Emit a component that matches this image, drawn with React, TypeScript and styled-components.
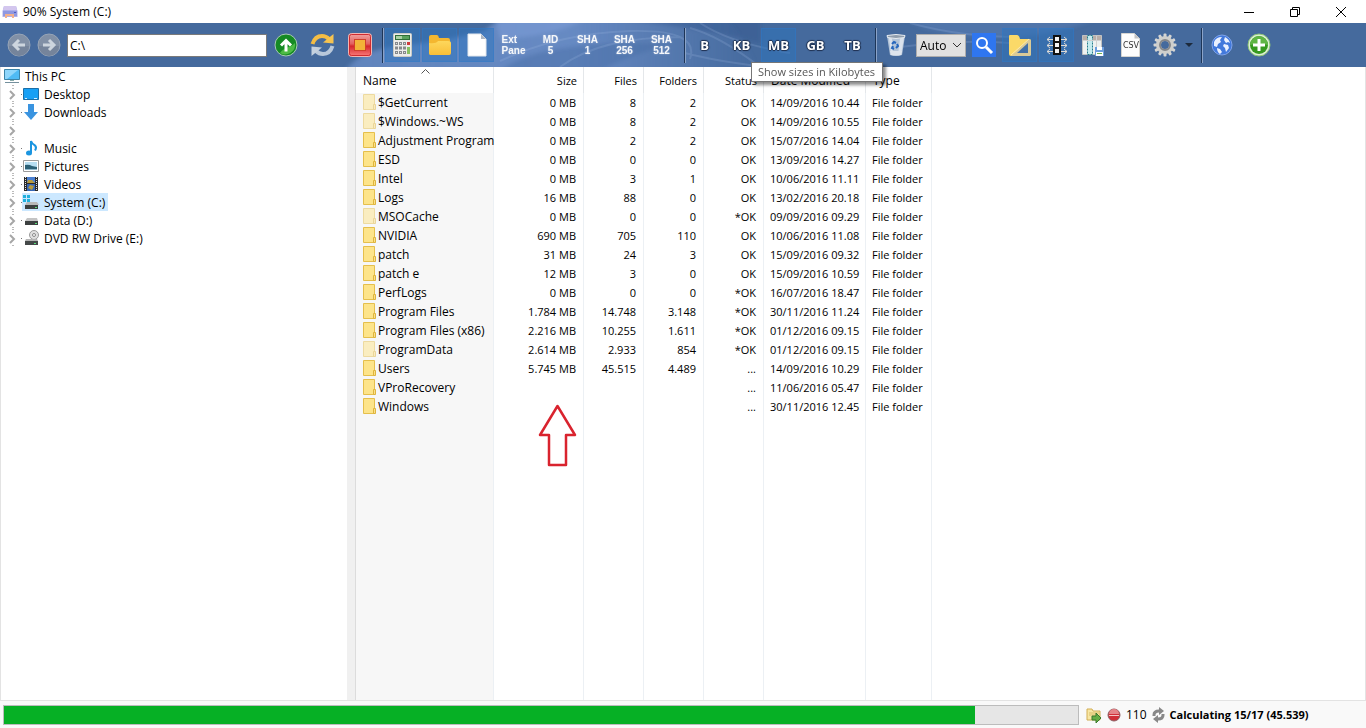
import React from 'react';
import styled, { createGlobalStyle, css } from 'styled-components';

const GlobalStyle = createGlobalStyle`
  * { box-sizing: border-box; }
  body { margin: 0; font-family: "Open Sans", "Noto Sans", sans-serif; font-size: 12px; color: #000; background: #f0f0f0; }
  button, input, select { font: inherit; color: inherit; margin: 0; }
  svg { display: block; flex: none; }
`;

const Window = styled.div`
  display: flex;
  flex-direction: column;
  min-height: 100vh;
`;

const TitleBar = styled.header`
  display: flex;
  align-items: center;
  height: 23px;
  padding: 0 2px;
  background: #fff;
`;

const Title = styled.h1`
  flex: 1;
  margin: 0 0 0 5px;
  font-size: 12px;
  font-weight: 400;
`;

const WindowButton = styled.button`
  display: flex;
  align-items: center;
  justify-content: center;
  width: 46px;
  height: 20px;
  padding: 0;
  border: 0;
  background: none;
`;

const Toolbar = styled.div`
  position: relative;
  z-index: 1;
  display: flex;
  align-items: center;
  height: 44px;
  padding-left: 4px;
  background: #456a9d;
`;

const Swirls = styled.svg`
  position: absolute;
  z-index: -1;
  top: 0;
  left: 0;
`;

const ToolButton = styled.button<{ $width?: number; $active?: boolean }>`
  display: flex;
  align-items: center;
  justify-content: center;
  width: ${(p) => p.$width ?? 37}px;
  height: 36px;
  padding: 0;
  border: 1px solid transparent;
  background: none;
  background-clip: padding-box;
  ${(p) =>
    p.$active &&
    css`
      background-color: rgba(44, 116, 190, 0.5);
      box-shadow: inset 0 0 0 1px rgba(45, 125, 205, 0.4);
    `}
`;

const HashLabel = styled.span<{ $left?: boolean }>`
  font: bold 10px/11px "Liberation Sans", sans-serif;
  color: #f6f8fb;
  text-align: ${(p) => (p.$left ? 'left' : 'center')};
  text-shadow: 0 0 2px #9fb2d3;
  white-space: pre;
`;

const UnitLabel = styled.span`
  font-size: 13px;
  font-weight: 700;
  color: #fff;
  text-shadow: 1px 0 1px #1f3150, -1px 0 1px #1f3150, 0 1px 1px #1f3150, 0 -1px 1px #1f3150;
`;

const Separator = styled.span`
  flex: none;
  width: 6px;
  height: 35px;
  border-right: 1px solid #8ba3c8;
  background: linear-gradient(#1d3557, #1d3557) 4px 0 / 1px 100% no-repeat;
`;

const PathInput = styled.input`
  width: 200px;
  height: 23px;
  margin-left: 3px;
  padding: 0 2px;
  border: 1px solid #7a7a7a;
  background: #fff;
`;

const Picker = styled.span`
  position: relative;
  display: flex;
  align-items: center;
  margin-left: 2px;
  svg { position: absolute; right: 4px; pointer-events: none; }
`;

const UnitSelect = styled.select`
  appearance: none;
  width: 50px;
  height: 23px;
  padding: 0 0 0 3px;
  border: 1px solid #adadad;
  border-radius: 0;
  background: #e1e1e1;
`;

const TipAnchor = styled.span`
  position: relative;
  display: flex;
`;

const Tip = styled.span`
  position: absolute;
  z-index: 2;
  top: 35px;
  left: 28px;
  padding: 0 7px 0 6px;
  border: 1px solid #767676;
  background: #fff;
  box-shadow: 3px 3px 3px rgba(0, 0, 0, 0.45);
  color: #575757;
  font-size: 11px;
  line-height: 18px;
  white-space: nowrap;
`;

const Main = styled.main`
  display: flex;
  flex: 1;
  border: solid #e3e3e3;
  border-width: 0 1px 1px;
  background: #fff;
`;

const TreePane = styled.nav`
  flex: none;
  width: 346px;
`;

const Splitter = styled.div`
  flex: none;
  width: 9px;
  border-right: 1px solid #dcdcdc;
  background: #f0f0f0;
`;

const TreeList = styled.ul`
  margin: 0;
  padding: 0;
  list-style: none;
`;

const TreeRow = styled.li`
  display: flex;
  align-items: center;
  height: 18px;
  padding-left: 2px;
`;

const Twisty = styled.span`
  display: flex;
  align-items: center;
  width: 19px;
  height: 18px;
`;

const TreeItem = styled.span<{ $selected?: boolean }>`
  display: flex;
  align-items: center;
  gap: 5px;
  height: 18px;
  padding: 0 3px 0 1px;
  background: ${(p) => (p.$selected ? '#cce8ff' : 'none')};
`;

const ListPane = styled.section`
  position: relative;
  display: flex;
  flex: 1;
`;

const FileTable = styled.table`
  width: 576px;
  table-layout: fixed;
  border-collapse: separate;
  border-spacing: 0;
  line-height: 16px;
`;

const HeadCell = styled.th<{ $right?: boolean }>`
  position: relative;
  height: 26px;
  padding: 2px 6px 0 7px;
  border-right: 1px solid #e4e7ea;
  font-size: ${(p) => (p.$right ? 11 : 12)}px;
  font-weight: 400;
  text-align: ${(p) => (p.$right ? 'right' : 'left')};
  white-space: nowrap;
`;

const SortMark = styled.svg`
  position: absolute;
  top: 2px;
  left: 65px;
`;

const Cell = styled.td<{ $right?: boolean }>`
  height: 19px;
  padding: 0 7px 0 6px;
  border-right: 1px solid #ecf0f4;
  text-align: ${(p) => (p.$right ? 'right' : 'left')};
  white-space: nowrap;
`;

const NumberCell = styled(Cell)`
  font-size: 11px;
`;

const NameCell = styled(Cell)`
  padding: 0 0 0 7px;
  background: #f7f7f7;
`;

const NameContent = styled.span`
  display: flex;
  align-items: center;
  gap: 1px;
`;

const FillCell = styled(Cell)`
  height: auto;
`;

const FillNameCell = styled(NameCell)`
  height: auto;
`;

const ArrowMark = styled.svg`
  position: absolute;
  top: 336px;
  left: 182px;
`;

const StatusBar = styled.footer`
  display: flex;
  align-items: center;
  height: 27px;
  padding-left: 3px;
  background: #f9f9f9;
`;

const Progress = styled.progress`
  appearance: none;
  flex: 1;
  height: 20px;
  border: 1px solid #bcbcbc;
  background: #e6e6e6;
  &::-webkit-progress-bar { background: #e6e6e6; }
  &::-webkit-progress-value { background: #06b025; }
`;

const StatusInfo = styled.div`
  display: flex;
  align-items: center;
  flex: none;
  gap: 5px;
  width: 287px;
  padding-left: 7px;
`;

const StatusText = styled.strong`
  font-size: 11px;
`;

/* ---------- icons ---------- */

const AppIcon = () => (
  <svg width="16" height="14" viewBox="0 0 16 14">
    <path d="M2 1h12l1.500 5v6H.5V6z" fill="#aeb0ea" />
    <path d="M2 1h12l1 4H1z" fill="#d3c6ee" />
    <path d="M1 6h14v5H1z" fill="#8f98e0" />
    <path d="M3 9h9v4h-2v-2H5v2H3z" fill="#f0b08c" />
    <path d="M12 7h2v1h-2z" fill="#4f5cc0" />
  </svg>
);

const NavIcon = ({ forward }: { forward?: boolean }) => (
  <svg width="24" height="24" viewBox="0 0 24 24">
    <circle cx="12" cy="12" r="11" fill="#8190a6" stroke="#97a4b6" />
    <path d="M2 13a10 10 0 0 0 20 0z" fill="#75849b" />
    <g transform={forward ? 'rotate(180 12 12)' : undefined} fill="none" stroke="#cdd5de" strokeWidth="3">
      <path d="M18 12H8M12 7l-5 5 5 5" />
    </g>
  </svg>
);

const UpIcon = () => (
  <svg width="24" height="24" viewBox="0 0 24 24">
    <circle cx="12" cy="12" r="11" fill="#158a24" stroke="#a9c8b6" />
    <path d="M6 20a10 10 0 0 0 15-10c-4 5-10 3-15 10z" fill="#4dbb45" />
    <path d="M12 18.500V8M7 12.500l5-5 5 5" fill="none" stroke="#fff" strokeWidth="3" />
  </svg>
);

const RefreshIcon = () => (
  <svg width="25" height="24" viewBox="0 0 25 24">
    <path d="M2.500 11Q5 3 12 3q4 0 7 3" fill="none" stroke="#f4bd45" strokeWidth="4" />
    <path d="M13 9.500 23.500 10.500V1z" fill="#f6c350" />
    <path d="M22.500 13Q20 21 13 21q-4 0-7-3" fill="none" stroke="#b9c8da" strokeWidth="4" />
    <path d="M12 14.500 1.500 13.500V23z" fill="#c4d0de" />
  </svg>
);

const StopIcon = () => (
  <svg width="24" height="24" viewBox="0 0 24 24">
    <defs>
      <linearGradient id="stop-face" x1="0" y1="0" x2="0" y2="1">
        <stop offset="0" stopColor="#f2a5a2" />
        <stop offset=".45" stopColor="#e2605f" />
        <stop offset=".55" stopColor="#d5262c" />
        <stop offset="1" stopColor="#fb7f7d" />
      </linearGradient>
    </defs>
    <rect x=".5" y=".5" width="23" height="23" rx="3" fill="url(#stop-face)" stroke="#f3b5b3" />
    <rect x="1.500" y="1.500" width="21" height="21" rx="2" fill="none" stroke="#cf2b30" />
    <path d="M6 6h12v12H6z" fill="#d0402a" />
    <path d="M7 7h10v10H7z" fill="#f3b238" />
  </svg>
);

const CalcIcon = () => (
  <svg width="20" height="24" viewBox="0 0 20 24">
    <rect x=".5" y=".5" width="18" height="23" rx="1" fill="#ececea" stroke="#c9c9c4" />
    <path d="M2 2h15v5H2z" fill="#2f6e38" />
    <path d="M3 3h13v3H3z" fill="#5aa25d" />
    <path d="M3 3h6v3H3z" fill="#a9cfa4" />
    {[10, 14.5, 19].map((y) =>
      [2, 6, 10].map((x) => (
        <rect key={`${x}-${y}`} x={x + 0.5} y={y - 0.5} width="2" height="2" fill="#ddd" stroke="#85898c" />
      )),
    )}
    <path d="M14 9h3v3h-3z" fill="#cf3a3a" />
    <path d="M14 14h3v7h-3z" fill="#86c163" />
  </svg>
);

const FolderIcon = () => (
  <svg width="24" height="24" viewBox="0 0 24 24">
    <defs>
      <linearGradient id="folder-face" x1="0" y1="0" x2="0" y2="1">
        <stop offset="0" stopColor="#fdd75c" />
        <stop offset="1" stopColor="#f9bf38" />
      </linearGradient>
    </defs>
    <path d="M1 4q0-2 2-2h6q1.500 0 2 3h9q2 0 2 2v13q0 2-2 2H3q-2 0-2-2z" fill="#f4b730" />
    <path d="M1 10q7 1 9-2h10q3 0 3 2v10q0 2-2 2H3q-2 0-2-2z" fill="url(#folder-face)" />
  </svg>
);

const PageIcon = () => (
  <svg width="20" height="24" viewBox="0 0 20 24">
    <path d="M1 1h13l5 5v17H1z" fill="#fff" stroke="#e3e7ec" />
    <path d="M14 1v5h5z" fill="#aeb8c4" />
  </svg>
);

const BinIcon = () => (
  <svg width="20" height="24" viewBox="0 0 20 24">
    <path d="M1 3h18l-3 19q-6 2-12 0z" fill="#b3c4d8" />
    <path d="M3 5h3l1 17H5zM14 5h4l-3 17h-3z" fill="#e3eaf3" opacity=".8" />
    <path d="M4 18h12l-1 4q-5 1-10 0z" fill="#dde4ed" />
    <path d="M1 2.500q9-2 18 0l-.5 2q-8.500 2-17 0z" fill="#8f9dad" stroke="#e7ecf1" />
    <g fill="none" stroke="#2767bd" strokeWidth="2">
      <path d="m6 11 2-2 2 1M11 11l1 2-2 2M8 16l-2-1 1-2" />
    </g>
  </svg>
);

const SearchIcon = () => (
  <svg width="24" height="24" viewBox="0 0 24 24">
    <path d="M0 0h24v24H0z" fill="#2f76f0" />
    <circle cx="10" cy="10" r="5" fill="none" stroke="#fff" strokeWidth="2" />
    <path d="m14 14 6 6" stroke="#fff" strokeWidth="3" />
  </svg>
);

const FolderEditIcon = () => (
  <svg width="24" height="24" viewBox="0 0 24 24">
    <path d="M1 3q0-1 1-1h7q2 0 3 4h9q2 0 2 2v13q0 2-2 2H3q-2 0-2-2z" fill="#fbd968" />
    <path d="M23 8v13q0 2-2 2H3L21 6q2 0 2 2z" fill="#d9ca98" />
    <path d="M20 10v10H9z" fill="#4170a8" />
    <path d="M3 22 21 6" stroke="#fbeaae" />
  </svg>
);

const ColumnFitIcon = () => (
  <svg width="22" height="22" viewBox="0 0 22 22">
    <g stroke="#dcd9d4" fill="none">
      <path d="M1 5.500h6M1 11.500h6M1 17.500h6M15 5.500h6M15 11.500h6M15 17.500h6" />
      <path d="m4 3-3 2.500L4 8m0 1-3 2.500L4 14m0 1-3 2.500L4 20M18 3l3 2.500L18 8m0 1 3 2.500-3 2.500m0 1 3 2.500-3 2.500" />
    </g>
    <path d="M8 2h6v18H8z" fill="#f4f4f4" stroke="#111" strokeWidth="2" />
    <path d="M8 8h6M8 14h6" stroke="#111" strokeWidth="2" />
  </svg>
);

const ColumnSaveIcon = () => (
  <svg width="23" height="23" viewBox="0 0 23 23">
    <path d="M.5 1.500h19v19H.5z" fill="#eef1f1" stroke="#c2c2c2" />
    <path d="M1 2h18v4H1z" fill="#b9aea8" />
    <path d="M5.500 1.500h5v19h-5z" fill="#c4ebf0" stroke="#247b8b" strokeDasharray="2 1" />
    <path d="M14.500 2v18M1 6.500h18" stroke="#d2d2d2" />
    <path d="M13 13h9v9h-9z" fill="#6c9ede" />
    <path d="M15 13h5v3h-5zM14 18h7v4h-7z" fill="#fff" />
    <path d="M15 19h5v1h-5z" fill="#6eb04b" />
  </svg>
);

const CsvLabel = styled.text`
  font: 8px "DejaVu Sans", sans-serif;
  fill: #333;
`;

const CsvIcon = () => (
  <svg width="20" height="24" viewBox="0 0 20 24">
    <path d="M.5.5h13l5 5v18H.5z" fill="#fdfdfd" stroke="#d5d5d2" />
    <path d="M13.500.5v5h5z" fill="#c4c4c4" />
    <CsvLabel x="10" y="15" textAnchor="middle">CSV</CsvLabel>
  </svg>
);

const GearIcon = () => (
  <svg width="24" height="24" viewBox="0 0 24 24">
    {Array.from({ length: 12 }, (_, i) => (
      <rect key={i} x="10.500" y="0.500" width="3" height="5" rx="1" fill="#d5d5d3" transform={`rotate(${i * 30} 12 12)`} />
    ))}
    <circle cx="12" cy="12" r="6.500" fill="none" stroke="#cfcfcc" strokeWidth="5" />
    <circle cx="12" cy="12" r="5" fill="none" stroke="#85878a" strokeWidth="2" />
  </svg>
);

const CaretIcon = () => (
  <svg width="8" height="4" viewBox="0 0 8 4">
    <path d="M0 0h8L4 4z" fill="#1d2a3c" />
  </svg>
);

const GlobeIcon = () => (
  <svg width="22" height="22" viewBox="0 0 22 22">
    <circle cx="11" cy="11" r="10" fill="#4279dc" stroke="#7fa3ea" />
    <path d="M3 8q2-5 8-5l-2 3 1 2-3 2-1 3-3-1zM14 3q4 2 5 6l-2-1-2 1-2-3zM13 10l4 1 1 3-3 4-1-4-2-2zM6 14l3 1 2 3-2 2q-3-2-3-6z" fill="#eaf1ff" />
  </svg>
);

const AddIcon = () => (
  <svg width="24" height="24" viewBox="0 0 24 24">
    <circle cx="12" cy="12" r="11" fill="#ddeed5" stroke="#8cc475" />
    <circle cx="12" cy="12" r="9" fill="#36991f" />
    <path d="M3 12a9 9 0 0 1 18 0q-9-3-18 0z" fill="#5fb544" />
    <path d="M12 6v12M6 12h12" stroke="#fff" strokeWidth="3" />
  </svg>
);

const ChevronIcon = ({ leaf }: { leaf: boolean }) => (
  <svg width="19" height="18" viewBox="0 0 19 18">
    <path d="m7 6 4 4-4 4" fill="none" stroke="#a6a6a6" strokeWidth="2" />
    <path d="M10 0v1M10 3v1M10 16v1" stroke="#777" />
    {leaf && <path d="M18 9.500h1" stroke="#777" />}
  </svg>
);

const TreeIcon = ({ kind }: { kind: string }) => (
  <svg width="16" height="16" viewBox="0 0 16 16">
    {kind === 'pc' && (
      <>
        <path d="M.5 1.500h15v10H.5z" fill="#4fbbf5" stroke="#3c84a8" />
        <path d="M1 2h13L3 11H1z" fill="#8fd6fb" />
        <path d="M6 12h4v1H6z" fill="#8aa" />
        <path d="M1 14.500h14" stroke="#74909d" />
      </>
    )}
    {kind === 'desktop' && (
      <>
        <path d="M.5 2.500h15v11H.5z" fill="#17a0f5" stroke="#1b6fa8" />
        <path d="M2 12.500h2m7 0h3" stroke="#d6efff" />
      </>
    )}
    {kind === 'downloads' && <path d="M5 0h6v8h4l-7 8-7-8h4z" fill="#3a94e0" />}
    {kind === 'music' && (
      <>
        <ellipse cx="6" cy="13" rx="3" ry="2.500" fill="#1b95e0" />
        <path d="M8 13V1q1 3 4 4.500 2 2 0 5" fill="none" stroke="#1b95e0" strokeWidth="2" />
      </>
    )}
    {kind === 'pictures' && (
      <>
        <path d="M.5 2.500h15v11H.5z" fill="#fff" stroke="#9a9a9a" />
        <path d="M2 4h12v8H2z" fill="#b7def2" />
        <path d="M2 7q4-1 7 1l5 1v3H2z" fill="#2b6076" />
        <path d="M2 11h12v1H2z" fill="#8fb8cc" />
      </>
    )}
    {kind === 'videos' && (
      <>
        <path d="M1 1h14v14H1z" fill="#2b2b2b" />
        <path d="M4 1h8v6H4z" fill="#4a7fd0" />
        <path d="M4 8h8v7H4z" fill="#3767b4" />
        <path d="M5 4h4l3 3H4zM7 9l4 1-2 4-4-2z" fill="#b89a3c" />
        <path d="M2.500 1v14M13.500 1v14" stroke="#e5e5e5" strokeDasharray="1 1" />
      </>
    )}
    {kind === 'system' && (
      <>
        <path d="M0 1h3v3H0zM4 1h3v3H4zM0 5h3v3H0zM4 5h3v3H4z" fill="#21b0dc" />
        <path d="M4 8h10l2 3H2z" fill="#b9b9b9" />
        <path d="M2 11h13v4H2z" fill="#3c4040" />
        <path d="M12 13h2v1h-2z" fill="#59e07a" />
      </>
    )}
    {kind === 'data' && (
      <>
        <path d="M4 6h10l1 3H2z" fill="#c4c4c4" />
        <path d="M2 9h13v4H2z" fill="#3c4040" />
        <path d="M12 11h2v1h-2z" fill="#59e07a" />
      </>
    )}
    {kind === 'dvd' && (
      <>
        <circle cx="11" cy="5" r="4.500" fill="#e0e0e0" stroke="#9b9b9b" />
        <circle cx="11" cy="5" r="1.500" fill="#fff" stroke="#888" />
        <path d="M3 9h11l1 2H2z" fill="#b5b5b5" />
        <path d="M2 11h13v4H2z" fill="#444848" />
        <path d="M11 13h2v1h-2z" fill="#59e07a" />
      </>
    )}
  </svg>
);

const RowFolderIcon = ({ faded }: { faded?: boolean }) => (
  <svg width="14" height="17" viewBox="0 0 14 17" opacity={faded ? 0.5 : 1}>
    <path d="M.5.5h11v15H.5z" fill="#fde48a" stroke="#e5bf4c" />
    <path d="M10.500 10.500h2v5h-2z" fill="#fbe08a" stroke="#dfb53d" />
  </svg>
);

const ToolbarSwirls = () => (
  <Swirls width="1240" height="44" viewBox="0 0 1240 44" aria-hidden="true">
    <defs>
      <linearGradient id="haze" gradientUnits="userSpaceOnUse" x1="345" x2="760" y1="0" y2="0">
        <stop offset="0" stopColor="#7d9fdc" stopOpacity=".5" />
        <stop offset=".55" stopColor="#7d9fdc" stopOpacity=".6" />
        <stop offset="1" stopColor="#7d9fdc" stopOpacity="0" />
      </linearGradient>
      <filter id="soft" x="-10%" y="-30%" width="120%" height="160%">
        <feGaussianBlur stdDeviation="2" />
      </filter>
    </defs>
    <g filter="url(#soft)">
      <path d="M345 48q15-22 60-26 40-4 80-14 10-12 30-14h210q20 20 35 54z" fill="url(#haze)" />
      <path d="M495-4h90q-30 18-85 20z" fill="#8aa8e0" opacity=".4" />
      <path d="M620-4h140v24q-60-14-140-24z" fill="#33568d" opacity=".45" />
      <path d="M500 48q20-18 70-24 60-8 100-2-40 10-70 26z" fill="#486ca4" opacity=".45" />
      <path d="M905-4h190q-40 18-100 18T905-4z" fill="#7596d3" opacity=".25" />
    </g>
    <g fill="none" stroke="#a3bce8" opacity=".2" strokeWidth="2">
      <path d="M500 38q60-28 130-30t60 28M560 44q40-30 120-30M685 30q30 8 80 14M690 5q30 8 70 39M700 0q30 20 90 30" />
      <path d="M900 24q60-8 110-4M910 0q50 14 110 14" />
    </g>
  </Swirls>
);

/* ---------- data ---------- */

const tree = [
  { label: 'Desktop', kind: 'desktop' },
  { label: 'Downloads', kind: 'downloads' },
  { label: '', kind: '' },
  { label: 'Music', kind: 'music' },
  { label: 'Pictures', kind: 'pictures' },
  { label: 'Videos', kind: 'videos' },
  { label: 'System (C:)', kind: 'system' },
  { label: 'Data (D:)', kind: 'data' },
  { label: 'DVD RW Drive (E:)', kind: 'dvd' },
];

const columns = [
  { label: 'Name', width: 138 },
  { label: 'Size', width: 90, right: true },
  { label: 'Files', width: 60, right: true },
  { label: 'Folders', width: 60, right: true },
  { label: 'Status', width: 60, right: true },
  { label: 'Date Modified', width: 102 },
  { label: 'Type', width: 66 },
];

const rows = [
  ['$GetCurrent', '0 MB', '8', '2', 'OK', '14/09/2016 10.44'],
  ['$Windows.~WS', '0 MB', '8', '2', 'OK', '14/09/2016 10.55'],
  ['Adjustment Program', '0 MB', '2', '2', 'OK', '15/07/2016 14.04'],
  ['ESD', '0 MB', '0', '0', 'OK', '13/09/2016 14.27'],
  ['Intel', '0 MB', '3', '1', 'OK', '10/06/2016 11.11'],
  ['Logs', '16 MB', '88', '0', 'OK', '13/02/2016 20.18'],
  ['MSOCache', '0 MB', '0', '0', '*OK', '09/09/2016 09.29'],
  ['NVIDIA', '690 MB', '705', '110', 'OK', '10/06/2016 11.08'],
  ['patch', '31 MB', '24', '3', 'OK', '15/09/2016 09.32'],
  ['patch e', '12 MB', '3', '0', 'OK', '15/09/2016 10.59'],
  ['PerfLogs', '0 MB', '0', '0', '*OK', '16/07/2016 18.47'],
  ['Program Files', '1.784 MB', '14.748', '3.148', '*OK', '30/11/2016 11.24'],
  ['Program Files (x86)', '2.216 MB', '10.255', '1.611', '*OK', '01/12/2016 09.15'],
  ['ProgramData', '2.614 MB', '2.933', '854', '*OK', '01/12/2016 09.15'],
  ['Users', '5.745 MB', '45.515', '4.489', '...', '14/09/2016 10.29'],
  ['VProRecovery', '', '', '', '...', '11/06/2016 05.47'],
  ['Windows', '', '', '', '...', '30/11/2016 12.45'],
];

const hiddenFolders = ['$GetCurrent', '$Windows.~WS', 'MSOCache', 'ProgramData'];

const hashes = ['Ext\nPane', 'MD\n5', 'SHA\n1', 'SHA\n256', 'SHA\n512'];

export default function App() {
  return (
    <Window>
      <GlobalStyle />
      <TitleBar>
        <AppIcon />
        <Title>90% System (C:)</Title>
        <WindowButton aria-label="Minimize">
          <svg width="10" height="10"><path d="M0 5.500h10" stroke="#000" /></svg>
        </WindowButton>
        <WindowButton aria-label="Restore">
          <svg width="10" height="10"><path d="M.5 2.500h7v7h-7zM2.500 2.500v-2h7v7h-2" fill="none" stroke="#000" /></svg>
        </WindowButton>
        <WindowButton aria-label="Close">
          <svg width="10" height="10"><path d="m0 0 10 10M10 0 0 10" stroke="#000" /></svg>
        </WindowButton>
      </TitleBar>

      <Toolbar role="toolbar" aria-label="Main">
        <ToolbarSwirls />
        <ToolButton $width={30} aria-label="Back"><NavIcon /></ToolButton>
        <ToolButton $width={30} aria-label="Forward"><NavIcon forward /></ToolButton>
        <PathInput aria-label="Path" defaultValue="C:\" />
        <ToolButton aria-label="Up"><UpIcon /></ToolButton>
        <ToolButton aria-label="Refresh"><RefreshIcon /></ToolButton>
        <ToolButton aria-label="Stop"><StopIcon /></ToolButton>
        <Separator />
        <ToolButton $active aria-label="Calculate"><CalcIcon /></ToolButton>
        <ToolButton $active aria-label="Show folders"><FolderIcon /></ToolButton>
        <ToolButton $active aria-label="Show files"><PageIcon /></ToolButton>
        {hashes.map((h, i) => (
          <ToolButton key={h}><HashLabel $left={i === 0}>{h}</HashLabel></ToolButton>
        ))}
        <Separator />
        <ToolButton><UnitLabel>B</UnitLabel></ToolButton>
        <TipAnchor>
          <ToolButton aria-describedby="kb-tip"><UnitLabel>KB</UnitLabel></ToolButton>
          <Tip id="kb-tip" role="tooltip">Show sizes in Kilobytes</Tip>
        </TipAnchor>
        <ToolButton $active><UnitLabel>MB</UnitLabel></ToolButton>
        <ToolButton><UnitLabel>GB</UnitLabel></ToolButton>
        <ToolButton><UnitLabel>TB</UnitLabel></ToolButton>
        <Separator />
        <ToolButton aria-label="Recycle bin"><BinIcon /></ToolButton>
        <Picker>
          <UnitSelect aria-label="Mode" defaultValue="Auto"><option>Auto</option></UnitSelect>
          <svg width="10" height="6"><path d="m1 1 4 4 4-4" fill="none" stroke="#333" /></svg>
        </Picker>
        <ToolButton $width={35} aria-label="Search"><SearchIcon /></ToolButton>
        <ToolButton $active aria-label="Edit folder"><FolderEditIcon /></ToolButton>
        <ToolButton $active aria-label="Fit columns"><ColumnFitIcon /></ToolButton>
        <ToolButton aria-label="Save columns"><ColumnSaveIcon /></ToolButton>
        <ToolButton aria-label="Export CSV"><CsvIcon /></ToolButton>
        <ToolButton $width={32} aria-label="Settings"><GearIcon /></ToolButton>
        <ToolButton $width={16} aria-label="More settings"><CaretIcon /></ToolButton>
        <Separator />
        <ToolButton aria-label="Website"><GlobeIcon /></ToolButton>
        <ToolButton aria-label="Add"><AddIcon /></ToolButton>
      </Toolbar>

      <Main>
        <TreePane aria-label="Folders">
          <TreeList>
            <TreeRow>
              <TreeItem><TreeIcon kind="pc" />This PC</TreeItem>
            </TreeRow>
            {tree.map((t) => (
              <TreeRow key={t.kind}>
                <Twisty><ChevronIcon leaf={t.label !== ''} /></Twisty>
                {t.label && (
                  <TreeItem $selected={t.kind === 'system'}>
                    <TreeIcon kind={t.kind} />
                    {t.label}
                  </TreeItem>
                )}
              </TreeRow>
            ))}
          </TreeList>
        </TreePane>
        <Splitter />
        <ListPane>
          <FileTable>
            <colgroup>
              {columns.map((c) => <col key={c.label} width={c.width} />)}
            </colgroup>
            <thead>
              <tr>
                {columns.map((c) => (
                  <HeadCell key={c.label} $right={c.right}>
                    {c.label}
                    {c.label === 'Name' && (
                      <SortMark width="9" height="5"><path d="M.5 4.500l4-4 4 4" fill="none" stroke="#555" /></SortMark>
                    )}
                  </HeadCell>
                ))}
              </tr>
            </thead>
            <tbody>
              {rows.map(([name, size, files, folders, status, date]) => (
                <tr key={name}>
                  <NameCell>
                    <NameContent>
                      <RowFolderIcon faded={hiddenFolders.includes(name)} />
                      {name}
                    </NameContent>
                  </NameCell>
                  <NumberCell $right>{size}</NumberCell>
                  <NumberCell $right>{files}</NumberCell>
                  <NumberCell $right>{folders}</NumberCell>
                  <NumberCell $right>{status}</NumberCell>
                  <NumberCell>{date}</NumberCell>
                  <NumberCell>File folder</NumberCell>
                </tr>
              ))}
              <tr aria-hidden="true">
                <FillNameCell />
                {columns.slice(1).map((c) => <FillCell key={c.label} />)}
              </tr>
            </tbody>
          </FileTable>
          <ArrowMark width="40" height="64" viewBox="0 0 40 64">
            <path d="M19.500 3 37 32h-9v30H11V32H2z" fill="none" stroke="#d9232e" strokeWidth="2.500" strokeLinejoin="round" />
          </ArrowMark>
        </ListPane>
      </Main>

      <StatusBar>
        <Progress value={90.4} max={100} aria-label="Calculation progress" />
        <StatusInfo>
          <svg width="16" height="16" viewBox="0 0 16 16">
            <path d="M1 2h5l1 2h7v9H1z" fill="#f8e7a4" stroke="#d2ae55" />
            <path d="M3 6h10M3 8h7" stroke="#d9bd6a" />
            <path d="M6 9h4V6l5 5-5 5v-3H6z" fill="#65ad45" stroke="#3a7a2c" />
          </svg>
          <svg width="14" height="14" viewBox="0 0 14 14">
            <circle cx="7" cy="7" r="6" fill="#d02f38" stroke="#8c6266" />
            <path d="M2 6a5 5 0 0 1 10 0z" fill="#e58488" />
            <path d="M2 7.500h10" stroke="#f4c5c5" />
          </svg>
          <span>110</span>
          <svg width="13" height="16" viewBox="0 0 13 16">
            <path d="M2 9V8q0-4 5-4M11 7v1q0 4-5 4" fill="none" stroke="#888" strokeWidth="3" />
            <path d="M7 0l5 4-5 4zM6 8l-5 4 5 4z" fill="#888" />
          </svg>
          <StatusText>Calculating 15/17 (45.539)</StatusText>
        </StatusInfo>
      </StatusBar>
    </Window>
  );
}
